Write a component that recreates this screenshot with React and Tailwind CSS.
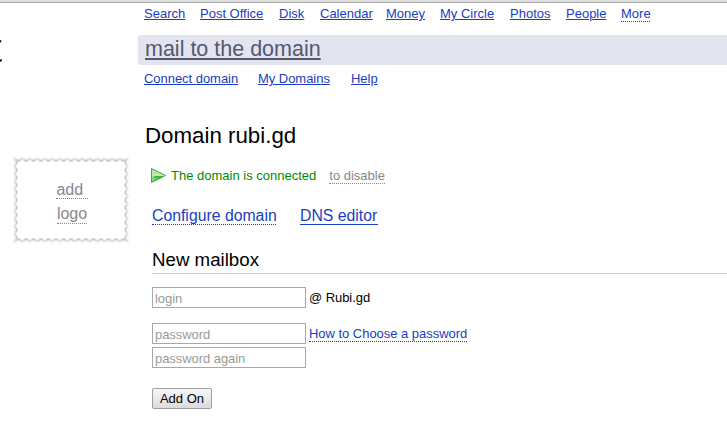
const services = [
  ["Search", "w-[41px]"],
  ["Post Office", "w-[64px]"],
  ["Disk", "w-[26px]"],
  ["Calendar", "w-[51px]"],
  ["Money", "w-[39px]"],
  ["My Circle", "w-[55px]"],
  ["Photos", "w-[41px]"],
  ["People", "w-[40px]"],
];
const sections = [
  ["Connect domain", "w-[94px]"],
  ["My Domains", "w-[73px]"],
  ["Help", "w-[26px]"],
];

const STAMP = { x: 1.8, y: 1.8, w: 112.4, h: 82.4, nx: 15, ny: 11 };

// Scalloped outline of a postage stamp.
function stampPath() {
  const { x, y, w, h, nx, ny } = STAMP;
  const sx = w / nx, sy = h / ny, a = 2;
  let d = `M${x} ${y}`;
  for (let i = 0; i < nx; i++) d += `c${sx / 4} 0 ${sx / 4} ${a} ${sx / 2} ${a}s${sx / 4} ${-a} ${sx / 2} ${-a}`;
  for (let i = 0; i < ny; i++) d += `c0 ${sy / 4} ${-a} ${sy / 4} ${-a} ${sy / 2}s${a} ${sy / 4} ${a} ${sy / 2}`;
  for (let i = 0; i < nx; i++) d += `c${-sx / 4} 0 ${-sx / 4} ${-a} ${-sx / 2} ${-a}s${-sx / 4} ${a} ${-sx / 2} ${a}`;
  for (let i = 0; i < ny; i++) d += `c0 ${-sy / 4} ${a} ${-sy / 4} ${a} ${-sy / 2}s${-a} ${-sy / 4} ${-a} ${-sy / 2}`;
  return d + "z";
}

// Darker shade in the inward dips of the perforation.
function dipsPath() {
  const { x, y, w, h, nx, ny } = STAMP;
  let d = "";
  for (let i = 0; i < nx; i++) {
    const cx = x + ((i + 0.5) * w) / nx;
    d += `M${cx - 1.8} ${y + 0.9}q1.8 2 3.6 0M${cx - 1.8} ${y + h - 0.9}q1.8 -2 3.6 0`;
  }
  for (let i = 0; i < ny; i++) {
    const cy = y + ((i + 0.5) * h) / ny;
    d += `M${x + 0.9} ${cy - 1.8}q2 1.8 0 3.6M${x + w - 0.9} ${cy - 1.8}q-2 1.8 0 3.6`;
  }
  return d;
}

function Play() {
  return (
    <svg width="16" height="16" viewBox="0 0 16 16" className="mr-1">
      <defs>
        <linearGradient id="play" x1="0" y1="0" x2="1" y2="0">
          <stop offset="0" stopColor="#8fe07e" />
          <stop offset="1" stopColor="#1c9a1c" />
        </linearGradient>
        <linearGradient id="shine" x1="0" y1="0" x2="0" y2="1">
          <stop offset="0" stopColor="#a5e09a" />
          <stop offset="1" stopColor="#dcf6d4" />
        </linearGradient>
      </defs>
      <path d="M.5 .5V14.5L14.5 7.5z" fill="url(#shine)" />
      <path d="M.5 8.5H13L.5 14.5z" fill="url(#play)" />
      <path d="M3 8.8H11" stroke="#27a327" />
      <path d="M.5 .5V14.5L14.5 7.5z" fill="none" stroke="#45a845" />
    </svg>
  );
}

function Field({ label }) {
  return (
    <input
      placeholder={label}
      className="block h-[21px] w-[154px] border border-[#a9a9a9] bg-white px-0.5 pt-0.5 text-[13px] leading-[15px] tracking-[-0.06px] placeholder:text-[#999]"
    />
  );
}

export default function App() {
  return (
    <div className="h-[443px] w-[727px] overflow-hidden bg-white font-['Liberation_Sans',Arial,sans-serif] text-[13px] leading-[15px] text-black">
      <div className="h-[3px] border-b border-[#aaa] bg-[#ddd]" />
      <div className="flex">
        <aside className="w-[138px] shrink-0 pt-9">
          <svg width="3" height="26" viewBox="0 0 3 26" className="block">
            <path d="M0 1L1.4 1.6V2.6L0 4zM0 20.6L1.8 20V22L0 23z" fill="#111" />
          </svg>
          <div className="relative mt-[92px] ml-[13px] h-[86px] w-[116px] pt-[24px] pl-0.5 text-base leading-6 text-[#888]">
            <svg width="116" height="86" className="absolute inset-0">
              <path d={stampPath()} fill="none" stroke="#eee" strokeWidth="3.2" />
              <path d={stampPath()} fill="none" stroke="#dedede" strokeWidth="1.2" />
              <path d={dipsPath()} fill="none" stroke="#c4c4c4" strokeWidth="1.1" />
            </svg>
            <div className="flex h-6 justify-center">
              <a className="h-[18px] border-b border-dotted border-[#888] leading-[18px] whitespace-pre">{"add "}</a>
            </div>
            <div className="flex h-6 justify-center">
              <a className="h-[19px] border-b border-dotted border-[#888] leading-[18px]">logo</a>
            </div>
          </div>
        </aside>
        <main className="min-w-0 flex-1">
          <nav className="flex h-8 gap-[15px] pt-[3px] pl-1.5 whitespace-nowrap text-[#1a3dc1]">
            {services.map(([name, width]) => (
              <a key={name} className={`underline ${width}`}>{name}</a>
            ))}
            <a className="h-4 w-[29px] border-b border-dotted border-[#1a3dc1]">More</a>
          </nav>
          <div className="h-[30px] rounded-l-[3px] bg-[#e2e5ef] pt-0.5 pl-[7px] text-[21.5px] leading-[25px] text-[#555770]">
            <a className="underline decoration-2 underline-offset-2 [text-decoration-skip-ink:none]">mail to the domain</a>
          </div>
          <nav className="flex gap-5 pt-1.5 pl-1.5 tracking-[-0.04px] whitespace-nowrap text-[#1a3dc1]">
            {sections.map(([name, width]) => (
              <a key={name} className={`underline ${width}`}>{name}</a>
            ))}
          </nav>
          <h1 className="mt-[37px] ml-[7px] text-[22.3px] leading-[26px]">Domain rubi.gd</h1>
          <div className="pl-3.5">
            <div className="mt-[19px] -ml-px flex h-[17px] text-[#008a00]">
              <Play />
              <span>The domain is connected</span>
              <a className="ml-[13px] h-4 border-b border-dotted border-[#888] text-[#888]">to disable</a>
            </div>
            <div className="mt-[22px] flex gap-6 text-[15.8px] leading-[17px] text-[#1a3dc1]">
              <a className="w-[124px] border-b border-dotted border-[#1a3dc1] whitespace-nowrap">Configure domain</a>
              <a className="w-[78px] border-b border-[#1a3dc1]">DNS editor</a>
            </div>
            <h2 className="mt-6 h-[25px] border-b border-[#ccc] pt-px text-[18.7px] leading-5">New mailbox</h2>
            <div className="mt-[13px] flex gap-[3px]">
              <Field label="login" />
              <span className="pt-[3px] tracking-[-0.06px]">@ Rubi.gd</span>
            </div>
            <div className="mt-[15px] flex gap-[3px]">
              <Field label="password" />
              <a className="mt-[3px] h-4 border-b border-dotted border-[#1a3dc1] tracking-[-0.03px] text-[#1a3dc1]">How to Choose a password</a>
            </div>
            <div className="mt-[3px]">
              <Field label="password again" />
            </div>
            <button className="mt-5 block h-[21px] w-[60px] rounded-[2px] border border-[#a0a0a0] bg-linear-to-b from-[#f6f6f6] to-[#dcdcdc] text-[13px] leading-[19px]">Add On</button>
          </div>
        </main>
      </div>
    </div>
  );
}
